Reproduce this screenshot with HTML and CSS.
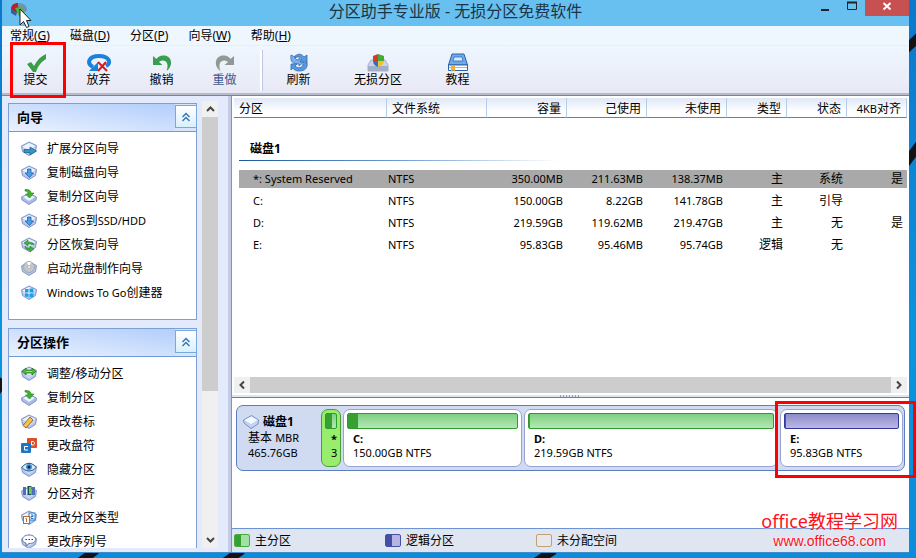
FILE: index.html
```
<!DOCTYPE html>
<html lang="zh-CN">

<head>
    <meta charset="UTF-8">
    <meta name="viewport" content="width=device-width, initial-scale=1.0">
    <title>分区助手专业版</title>
    <link rel="stylesheet" href="styles.css">
</head>

<body>
    <!-- shared icon shapes -->
    <svg class="sprite" aria-hidden="true">
        <symbol id="slab" viewBox="0 0 16 16">
            <path d="M.5 5L8 1L15.500 4.500L14.500 10.500L8 14.500L1.500 10.500Z" fill="#b4c6ee" stroke="#8296c6" />
            <path d="M1.500 5.500L8 2L14.500 5L8 9.500Z" fill="#eef4ff" />
            <path d="M2 7L8 11.500L14 7" fill="none" stroke="#dbe7ff" />
        </symbol>
        <symbol id="copyPart" viewBox="0 0 16 16">
            <path d="M.5 8L8 4.500L15.500 8L15 11L8 15.500L1 11Z" fill="#a9bce8" stroke="#8296c6" />
            <path d="M2 8L8 5.500L14 8L8 12Z" fill="#eef4ff" />
            <path d="M4 .5C7 0 10 1 10 4H13L8.500 9L4.500 5H7C7 3 6 2 4 2Z" fill="#3fb32b" stroke="#217c18" stroke-width=".6" />
        </symbol>
        <symbol id="downBlue" viewBox="0 0 16 16">
            <use href="#slab" />
            <path d="M6.500 4H10V8H12.500L8.500 12.500L4 8H6.500Z" fill="#4c9ee4" stroke="#1d5ea8" stroke-width=".8" />
        </symbol>
        <symbol id="chevrons" viewBox="0 0 10 10">
            <path d="M1.500 5L5 1.500L8.500 5M1.500 9L5 5.500L8.500 9" fill="none" stroke="#3d78b8" stroke-width="1.500" />
        </symbol>
    </svg>

    <svg class="wallpaper" viewBox="0 0 916 558" preserveAspectRatio="none" aria-hidden="true">
        <path d="M905 50L920 36M905 164L920 144M-4 392L4 380M80 562L96 550M225 562L242 550M536 562L554 550" stroke="#101418" stroke-width="9" />
    </svg>

    <div class="window">
        <header class="titleBar">
            <div class="appIcon">
                <svg width="18" height="16" viewBox="0 0 18 16">
                    <path d="M1 7C1 3 4 1 8 1L9 7L7 11L2 10Z" fill="#b5202a" />
                    <path d="M8 1C14 1 17 4 17 8L15 10L9 8Z" fill="#7292ad" />
                    <path d="M5 6L11 5L15 10L9 14L7 10Z" fill="#4bb43a" />
                    <path d="M1 7V11L6 14L7 10Z" fill="#385e9c" />
                </svg>
                <svg class="pointer" width="14" height="21" viewBox="0 0 14 21">
                    <path d="M1 1V17L4.500 13.500L7.500 19.500L10 18.500L7.500 12.500H12Z" fill="#fff" stroke="#222" />
                </svg>
            </div>
            <h1 class="title">分区助手专业版 - 无损分区免费软件</h1>
            <div class="controls">
                <button class="control" aria-label="最小化">
                    <svg width="10" height="10"><path d="M1 9H9" stroke="#222" stroke-width="2" /></svg>
                </button>
                <button class="control" aria-label="最大化">
                    <svg width="10" height="10"><path d="M.5 2V8.500H9.500V2" fill="none" stroke="#222" /><path d="M0 1.500H10" stroke="#222" stroke-width="2" /></svg>
                </button>
                <button class="control close" aria-label="关闭">
                    <svg width="10" height="10"><path d="M1.500 2L8.500 8.500M8.500 2L1.500 8.500" stroke="#fff" stroke-width="2" /></svg>
                </button>
            </div>
        </header>

        <nav class="menuBar">
            <button class="menu">常规(<u>G</u>)</button>
            <button class="menu">磁盘(<u>D</u>)</button>
            <button class="menu">分区(<u>P</u>)</button>
            <button class="menu">向导(<u>W</u>)</button>
            <button class="menu">帮助(<u>H</u>)</button>
        </nav>

        <div class="toolBar">
            <button class="tool marked">
                <svg width="24" height="20" viewBox="0 0 24 20"><path d="M3 11L7 9L10 13C13 7 17 3 22 1V6C17 9 14 13 12 19H9Z" fill="#3a9e45" /></svg>
                提交
            </button>
            <button class="tool">
                <svg width="24" height="20" viewBox="0 0 24 20">
                    <path d="M6 14C-1 10 2 3 12 3C22 3 25 10 19 13" fill="none" stroke="#1b82dc" stroke-width="4" />
                    <path d="M2 18H11V9Z" fill="#1b82dc" />
                    <path d="M11 9L20 18M19 9L11 18" stroke="#e01818" stroke-width="2" />
                </svg>
                放弃
            </button>
            <button class="tool">
                <svg width="24" height="20" viewBox="0 0 24 20"><path d="M3 3V12H12.500L9 9C14 5 20 9 16.500 18C24 13 22 2 13 2.500C10 2.500 8 4 6.500 6Z" fill="#3a9e51" /></svg>
                撤销
            </button>
            <button class="tool off" disabled>
                <svg width="24" height="20" viewBox="0 0 24 20"><path d="M21 3V12H11.500L15 9C10 5 4 9 7.500 18C0 13 2 2 11 2.500C14 2.500 16 4 17.500 6Z" fill="#8f9996" /></svg>
                重做
            </button>
            <span class="toolSep"></span>
            <button class="tool">
                <svg width="24" height="20" viewBox="0 0 24 20">
                    <path d="M4 2C3 9 6 11 12 11V13L17 9L12 5V7C9 7 8 6 8 4Z" fill="#7db0ea" stroke="#2f6cb8" stroke-width=".8" />
                    <path d="M8 3C12 0 15 1 17 4L20 2V9H13L15 6C13 4 11 3 8 5Z" fill="#5a98dc" stroke="#2f6cb8" stroke-width=".8" />
                    <path d="M20 9C21 15 18 18 12 18C9 18 7 17 6 15L4 17V11H10L8 13C11 16 16 15 16 11Z" fill="#5a98dc" stroke="#2f6cb8" stroke-width=".8" />
                </svg>
                刷新
            </button>
            <button class="tool wide">
                <svg width="24" height="20" viewBox="0 0 24 20">
                    <path d="M5 7H19L22 12V18H2V12Z" fill="#cdd3e2" stroke="#a8b0c8" />
                    <path d="M2 13H22V18H2Z" fill="#a2adc8" />
                    <path d="M12 1L7 3V8H12Z" fill="#d43c28" />
                    <path d="M12 1L18 3V8H12Z" fill="#48a936" />
                    <path d="M7 8H12V14C9 13 7 11 7 8Z" fill="#2d72c8" />
                    <path d="M12 8H18C18 11 15 13 12 14Z" fill="#f2c22c" />
                </svg>
                无损分区
            </button>
            <button class="tool">
                <svg width="24" height="20" viewBox="0 0 24 20">
                    <path d="M6 1H18L21.500 12H2.500Z" fill="#6fa9e8" stroke="#2a62b0" />
                    <path d="M8 4H16L17 8H7Z" fill="#d8e8fb" stroke="#2a62b0" stroke-width=".7" />
                    <path d="M2.500 12H21.500V17.500H2.500Z" fill="#fff" stroke="#2a62b0" />
                    <path d="M3 14.500H21" stroke="#c8b57c" />
                    <path d="M5 13H9V19L7 17L5 19Z" fill="#f0b030" />
                </svg>
                教程
            </button>
        </div>

        <div class="content">
            <aside class="sidebar">
                <div class="cards">
                    <section class="card">
                        <div class="cardHead">
                            <h2 class="cardTitle">向导</h2>
                            <button class="fold" aria-label="收起向导"><svg width="10" height="10"><use href="#chevrons" /></svg></button>
                        </div>
                        <ul class="links">
                            <li><a href="#"><svg class="icon" viewBox="0 0 16 16"><use href="#slab" /><path d="M3 8.500H9V6L15.500 10L9 14V11.500H3Z" fill="#3995c4" stroke="#1d6291" stroke-width=".8" /></svg>扩展分区向导</a></li>
                            <li><a href="#"><svg class="icon"><use href="#downBlue" /></svg>复制磁盘向导</a></li>
                            <li><a href="#"><svg class="icon"><use href="#copyPart" /></svg>复制分区向导</a></li>
                            <li><a href="#"><svg class="icon"><use href="#downBlue" /></svg><span>迁移<span class="latin">OS</span>到<span class="latin">SSD/HDD</span></span></a></li>
                            <li><a href="#"><svg class="icon" viewBox="0 0 16 16"><use href="#slab" /><path d="M3 6L7 3V5C11 5 13 6 13 8C11 7 9 7 7 7V9ZM13 12L9 15V13C6 13 4 12 4 9C6 11 7 11 9 11V9Z" fill="#44b044" stroke="#1f7c28" stroke-width=".6" /></svg>分区恢复向导</a></li>
                            <li><a href="#"><svg class="icon" viewBox="0 0 16 16"><use href="#slab" /><circle cx="8" cy="6" r="5.500" fill="#c4c8cc" stroke="#8d959f" stroke-width=".7" /><path d="M8 6L6 1L10 1Z" fill="#fff" /><circle cx="8" cy="6" r="1.500" fill="#fff" stroke="#8d959f" stroke-width=".6" /></svg>启动光盘制作向导</a></li>
                            <li><a href="#"><svg class="icon" viewBox="0 0 16 16"><use href="#slab" /><path d="M4 4H7.500V7.500H4ZM8.500 3.500H12.500V7.500H8.500ZM4 8.500H7.500V12L4 11.500ZM8.500 8.500H12.500V12L8.500 12.500Z" fill="#1ba1ea" /></svg><span><span class="latin">Windows To Go</span>创建器</span></a></li>
                        </ul>
                    </section>

                    <section class="card">
                        <div class="cardHead">
                            <h2 class="cardTitle">分区操作</h2>
                            <button class="fold" aria-label="收起分区操作"><svg width="10" height="10"><use href="#chevrons" /></svg></button>
                        </div>
                        <ul class="links">
                            <li><a href="#"><svg class="icon" viewBox="0 0 16 16"><use href="#slab" /><path d="M1 5.500L5 2V4H11V2L15 5.500L11 9V7H5V9Z" fill="#52b52f" stroke="#23761a" stroke-width=".8" /><path d="M5 5.500H11" stroke="#e9c93c" /></svg>调整/移动分区</a></li>
                            <li><a href="#"><svg class="icon"><use href="#copyPart" /></svg>复制分区</a></li>
                            <li><a href="#"><svg class="icon" viewBox="0 0 16 16"><use href="#slab" /><path d="M9 3L12 6L5 14L2 11.500Z" fill="#f5c44c" stroke="#a8681c" /></svg>更改卷标</a></li>
                            <li><a href="#"><svg class="icon" viewBox="0 0 16 16"><rect x="6" y="0" width="10" height="10" rx="1" fill="#d8502c" /><path d="M10.500 3.500V7H12C14 7 14 3.500 12 3.500Z" fill="none" stroke="#fff" /><rect x="0" y="5" width="10" height="10" rx="1" fill="#1f74c4" /><path d="M7 8.500H3.500V12H7" fill="none" stroke="#fff" /></svg>更改盘符</a></li>
                            <li><a href="#"><svg class="icon" viewBox="0 0 16 16"><use href="#slab" /><path d="M1 5.500C4 0 12 0 15 5.500C12 10 4 10 1 5.500Z" fill="#d2edff" stroke="#365c8c" /><circle cx="8" cy="5" r="3" fill="#3c93d4" /><circle cx="8" cy="5" r="1.500" fill="#10243c" /></svg>隐藏分区</a></li>
                            <li><a href="#"><svg class="icon" viewBox="0 0 16 16"><use href="#slab" /><path d="M3.500 1V9M12.500 1V9" stroke="#4a70b8" stroke-width="3" /><path d="M8.500 0V9" stroke="#254c55" stroke-width="4" /><path d="M9 1V8" stroke="#6ecb55" stroke-width="2" /></svg>分区对齐</a></li>
                            <li><a href="#"><svg class="icon" viewBox="0 0 16 16"><use href="#slab" /><rect x="8" y="3" width="6" height="7" fill="#fff" stroke="#2678c4" /><path d="M10 5H12V6.500H10V8.500H12.500" fill="none" stroke="#2678c4" /><rect x="2.500" y="6.500" width="6" height="7" fill="#fff" stroke="#c06a28" /><path d="M4.500 8.500H5.500V12" fill="none" stroke="#c06a28" /></svg>更改分区类型</a></li>
                            <li><a href="#"><svg class="icon" viewBox="0 0 16 16"><use href="#slab" /><path d="M8 1C12 1 14.500 3 14.500 5.500C14.500 8 12 9.500 8 9.500L5 12V9C2.500 8.500 1.500 7 1.500 5.500C1.500 3 4 1 8 1Z" fill="#fff" stroke="#5f74a8" /><path d="M4.500 5.500H6M7.500 5.500H9M10.500 5.500H12" stroke="#333" /></svg>更改序列号</a></li>
                        </ul>
                    </section>
                </div>
                <div class="vScroll">
                    <svg class="arrow" viewBox="0 0 16 16"><path d="M5 10L8.500 6.500L12 10" /></svg>
                    <div class="vTrack"><div class="vThumb"></div></div>
                    <svg class="arrow" viewBox="0 0 16 16"><path d="M5 6L8.500 9.500L12 6" /></svg>
                </div>
            </aside>

            <main class="main">
                <div class="tableWrap">
                    <table class="parts">
                        <colgroup>
                            <col class="colName">
                            <col class="colFs">
                            <col class="colSize">
                            <col class="colSize">
                            <col class="colSize">
                            <col class="colFlag">
                            <col class="colFlag">
                            <col class="colFlag">
                        </colgroup>
                        <thead>
                            <tr>
                                <th>分区</th>
                                <th>文件系统</th>
                                <th class="num">容量</th>
                                <th class="num">己使用</th>
                                <th class="num">未使用</th>
                                <th class="num">类型</th>
                                <th class="num">状态</th>
                                <th class="num"><span class="latin">4KB</span>对齐</th>
                            </tr>
                        </thead>
                        <tbody>
                            <tr>
                                <td class="group" colspan="8"><div class="groupName">磁盘1</div></td>
                            </tr>
                            <tr class="selected">
                                <td>*: System Reserved</td>
                                <td>NTFS</td>
                                <td class="num">350.00MB</td>
                                <td class="num">211.63MB</td>
                                <td class="num">138.37MB</td>
                                <td class="num cn">主</td>
                                <td class="num cn">系统</td>
                                <td class="num cn">是</td>
                            </tr>
                            <tr>
                                <td>C:</td>
                                <td>NTFS</td>
                                <td class="num">150.00GB</td>
                                <td class="num">8.22GB</td>
                                <td class="num">141.78GB</td>
                                <td class="num cn">主</td>
                                <td class="num cn">引导</td>
                                <td class="num cn"></td>
                            </tr>
                            <tr>
                                <td>D:</td>
                                <td>NTFS</td>
                                <td class="num">219.59GB</td>
                                <td class="num">119.62MB</td>
                                <td class="num">219.47GB</td>
                                <td class="num cn">主</td>
                                <td class="num cn">无</td>
                                <td class="num cn">是</td>
                            </tr>
                            <tr>
                                <td>E:</td>
                                <td>NTFS</td>
                                <td class="num">95.83GB</td>
                                <td class="num">95.46MB</td>
                                <td class="num">95.74GB</td>
                                <td class="num cn">逻辑</td>
                                <td class="num cn">无</td>
                                <td class="num cn"></td>
                            </tr>
                        </tbody>
                    </table>
                </div>

                <div class="hScroll">
                    <svg class="arrow" viewBox="0 0 16 16"><path d="M10 4.500L6.500 8L10 11.500" /></svg>
                    <div class="hThumb"></div>
                    <svg class="arrow" viewBox="0 0 16 16"><path d="M6 4.500L9.500 8L6 11.500" /></svg>
                </div>
                <div class="splitter"><span class="grip"></span></div>

                <div class="diskArea">
                    <div class="disk">
                        <div class="diskInfo">
                            <div class="diskName"><svg class="icon" viewBox="0 0 16 16"><path d="M.5 6L8.500 1.500L15.500 6L15 10L8 14.500L1 9Z" fill="#c3d3f0" stroke="#7a90c4" /><path d="M1.500 6L8.500 2.500L14.500 6L8 10Z" fill="#f4f9ff" /></svg>磁盘1</div>
                            <div>基本 <span class="latin">MBR</span></div>
                            <div class="latin">465.76GB</div>
                        </div>
                        <button class="part small">
                            <span class="bar"><span class="used" style="width: 55%"></span></span>
                            <b>*</b>
                            <span>3</span>
                        </button>
                        <button class="part partC">
                            <span class="bar"><span class="used" style="width: 6%"></span></span>
                            <b>C:</b>
                            <span>150.00GB NTFS</span>
                        </button>
                        <button class="part partD">
                            <span class="bar"><span class="used" style="width: 0.5%"></span></span>
                            <b>D:</b>
                            <span>219.59GB NTFS</span>
                        </button>
                        <button class="part partE logical marked">
                            <span class="bar"><span class="used" style="width: 0.5%"></span></span>
                            <b>E:</b>
                            <span>95.83GB NTFS</span>
                        </button>
                    </div>
                </div>

                <footer class="legend">
                    <div class="legendItem"><span class="swatch"></span>主分区</div>
                    <div class="legendItem"><span class="swatch blue"></span>逻辑分区</div>
                    <div class="legendItem"><span class="swatch empty"></span>未分配空间</div>
                </footer>
            </main>
        </div>
    </div>

    <div class="watermark">
        <div class="siteName">office教程学习网</div>
        <div class="siteUrl">www.office68.com</div>
    </div>
</body>

</html>
```
FILE: styles.css
```
* {
    box-sizing: border-box;
    padding: 0;
    margin: 0;
}

body {
    position: relative;
    height: 100vh;
    padding: 0 7px 5px 2px;
    overflow: hidden;
    background: linear-gradient(#0a78cc, #0a94e0 60%, #0a8cdc);
    color: #000;
    font-family: "Noto Sans", "Noto Sans CJK SC", sans-serif;
    font-size: 12px;
    line-height: 16px;
}

button {
    border: none;
    background: none;
    color: inherit;
    font: inherit;
}

a {
    color: inherit;
    text-decoration: none;
}

ul {
    list-style: none;
}

svg {
    display: block;
    flex: none;
}

.sprite {
    position: absolute;
    width: 0;
    height: 0;
}

.wallpaper {
    position: absolute;
    inset: 0;
    width: 100%;
    height: 100%;
}

.icon {
    width: 16px;
    height: 16px;
}

.latin {
    font-size: 11px;
}

.window {
    position: relative;
    display: flex;
    flex-direction: column;
    height: 100%;
    background: #e3eafb;
    border-bottom: 1px solid #3f8cc8;
}

/* title bar */
.titleBar {
    display: grid;
    grid-template-columns: 1fr auto 1fr;
    height: 26px;
    background: #68c0f0;
}

.appIcon {
    position: relative;
    padding: 2px 8px;
}

.pointer {
    position: absolute;
    top: 8px;
    left: 17px;
    z-index: 2;
}

.title {
    color: #1c3444;
    font-size: 16px;
    font-weight: 400;
    line-height: 22px;
}

.controls {
    display: flex;
    justify-content: flex-end;
}

.control {
    display: flex;
    justify-content: center;
    width: 27px;
    height: 16px;
    padding-top: 1px;
}

.close {
    width: 44px;
    background: #c75050;
}

/* menu and tool bar */
.menuBar {
    display: flex;
    gap: 20px;
    height: 19px;
    padding: 0 8px;
    background: #eef6fe;
}

.menu {
    line-height: 20px;
}

.toolBar {
    display: flex;
    height: 51px;
    padding: 0 2px;
    background: linear-gradient(#eef6fe, #e9e9f6 94%);
    border-top: 1px solid #e8eff5;
    border-bottom: 1px solid #4a90dc;
    box-shadow: inset 0 -2px #b4bccc;
}

.tool {
    position: relative;
    display: flex;
    flex-direction: column;
    align-items: center;
    width: 63px;
    padding-top: 7px;
    line-height: 14px;
}

.tool.wide {
    width: 96px;
}

.tool.off {
    color: #40568c;
}

.toolSep {
    width: 3px;
    margin: 4px;
    background: #fff;
    border-right: 1px solid #bcc6e0;
}

.marked::after {
    content: "";
    position: absolute;
    z-index: 1;
    border: 3px solid #fe0000;
}

.tool.marked::after {
    inset: -4px 1px -3px 6px;
}

.content {
    display: flex;
    flex: 1;
    min-height: 0;
}

/* left side */
.sidebar {
    display: flex;
    justify-content: space-between;
    width: 230px;
    padding: 5px 13px 4px 6px;
    background: #e3eafb;
    border-right: 1px solid #7c94c4;
    box-shadow: inset -3px 0 #c3cbe6;
}

.cards {
    width: 189px;
    padding-top: 2px;
    overflow: hidden;
}

.card {
    margin-bottom: 8px;
    padding-bottom: 14px;
    background: #fff;
    border: 1px solid #7d9fd4;
}

.cardHead {
    display: flex;
    height: 28px;
    background: #d9e5fa;
    border-bottom: 1px solid #6f9bd6;
}

.cardTitle {
    flex: 1;
    padding-left: 8px;
    background: linear-gradient(to right, #f0f5ff60, #a8c8fa60), linear-gradient(#b8d2fb, #e8f0ff);
    font-size: 13px;
    line-height: 27px;
}

.fold {
    display: flex;
    align-items: center;
    justify-content: center;
    width: 22px;
    height: 23px;
    margin: 1px -1px 0 0;
    background: linear-gradient(#fff, #d9f0fc);
    border: 1px solid #78a8e0;
}

.links {
    padding-top: 5px;
}

.links a {
    display: flex;
    align-items: center;
    gap: 10px;
    height: 24px;
    padding-left: 12px;
}

.vScroll {
    display: flex;
    flex-direction: column;
    width: 16px;
    background: #f0f0f0;
}

.arrow {
    width: 16px;
    height: 16px;
    fill: none;
    stroke: #444;
    stroke-width: 2;
}

.vTrack {
    flex: 1;
}

.vThumb {
    height: 66%;
    background: #cdcdcd;
}

/* partition table */
.main {
    display: flex;
    flex: 1;
    flex-direction: column;
    min-width: 0;
    background: #fff;
}

.tableWrap {
    flex: 1;
    min-height: 0;
    padding: 2px 2px 0;
}

.parts {
    width: 100%;
    table-layout: fixed;
    border-spacing: 0;
}

.colName {
    width: 153px;
}

.colFs {
    width: 100px;
}

.colSize {
    width: 80px;
}

.colFlag {
    width: 60px;
}

.parts th {
    height: 20px;
    padding: 3px 5px 0;
    background: linear-gradient(#dfe8f7, #fff 70%);
    border-right: 1px solid #b4cdec;
    border-bottom: 1px solid #4a86d0;
    font-weight: 400;
    line-height: 16px;
    text-align: left;
}

.parts td {
    height: 22px;
    padding: 0 4px 0 1px;
    border: 2px solid #fff;
    border-width: 2px 0;
    background-clip: padding-box;
    font-size: 11px;
    line-height: 18px;
}

.parts td:first-child {
    padding-left: 14px;
    border-left-width: 5px;
}

.parts td.cn {
    font-size: 12px;
}

.parts .num {
    text-align: right;
}

.parts .selected td {
    background-color: #a9a9a9;
}

.parts td.group:first-child {
    height: 50px;
    padding: 7px 0 0;
}

.groupName {
    width: 320px;
    padding: 8px 11px 3px;
    background: linear-gradient(to right, #1c5898, #6e9cd4 50%, #fff) bottom / 100% 1px no-repeat;
    font-size: 12px;
    font-weight: 700;
    line-height: 18px;
}

.hScroll {
    display: flex;
    height: 16px;
    margin: 0 2px;
    background: #f0f0f0;
}

.hThumb {
    flex: 1;
    background: #cdcdcd;
}

.splitter {
    display: flex;
    justify-content: center;
    height: 5px;
    padding-top: 2px;
    background: linear-gradient(#fff 2px, #dde5f3 2px);
    border-bottom: 1px solid #5c80c4;
}

.grip {
    width: 21px;
    background: repeating-linear-gradient(to right, #88a0c4 0 1px, #dde5f3 1px 3px);
}

/* disk map */
.diskArea {
    padding: 7px 4px 57px;
}

.disk {
    display: flex;
    gap: 2px;
    padding: 3px 1px;
    background: #d0daf0;
    border: 1px solid #5c7cc4;
    border-radius: 7px;
}

.diskInfo {
    width: 81px;
    padding: 5px 0 0 10px;
    line-height: 15px;
}

.diskName {
    display: flex;
    gap: 4px;
    margin-left: -5px;
    font-weight: 700;
}

.part {
    position: relative;
    display: flex;
    flex-direction: column;
    height: 58px;
    padding: 3px;
    background: #fff;
    border: 1px solid #98a4cf;
    border-radius: 7px;
    font-size: 11px;
    line-height: 14px;
    text-align: left;
}

.part b,
.part > span:last-child {
    padding-left: 6px;
}

.part b {
    margin-top: 3px;
}

.partC {
    flex: 171;
}

.partD {
    flex: 246;
}

.partE {
    flex: 115;
}

.part.small {
    width: 20px;
    background: #98ee6c;
    border-color: #4c9c38;
    text-align: right;
}

.bar {
    display: flex;
    height: 16px;
    background: linear-gradient(#7ed082, #b4e8b4);
    border: 1px solid #2f9a30;
    border-radius: 2px;
}

.used {
    background: #36a030;
}

.logical .bar {
    background: linear-gradient(#8c8ccc, #bcb8e4);
    border-color: #32389c;
}

.logical .used {
    background: #4450b0;
}

.part.marked::after {
    inset: -9px -14px -12px -6px;
}

.legend {
    display: flex;
    height: 24px;
    padding-left: 2px;
    background: #dfe6f2;
    border-top: 1px solid #6c94d4;
}

.legendItem {
    display: flex;
    align-items: center;
    gap: 5px;
    width: 151px;
}

.swatch {
    width: 16px;
    height: 13px;
    background: linear-gradient(to right, #36a030 45%, #a4dfa4 45%);
    border: 1px solid #45ad40;
    border-radius: 2px;
}

.swatch.blue {
    background: linear-gradient(to right, #4450a8 45%, #b8b4e0 45%);
    border-color: #4450a8;
}

.swatch.empty {
    background: #e8e8ec;
    border-color: #c0a078;
}

.watermark {
    position: absolute;
    right: 18px;
    bottom: 8px;
    color: #fe1020;
    text-shadow: 0 0 2px #fff;
    text-align: center;
}

.siteName {
    font-size: 18px;
    line-height: 22px;
}

.siteUrl {
    font-family: "Liberation Sans", sans-serif;
    font-size: 14px;
    line-height: 18px;
}
```
